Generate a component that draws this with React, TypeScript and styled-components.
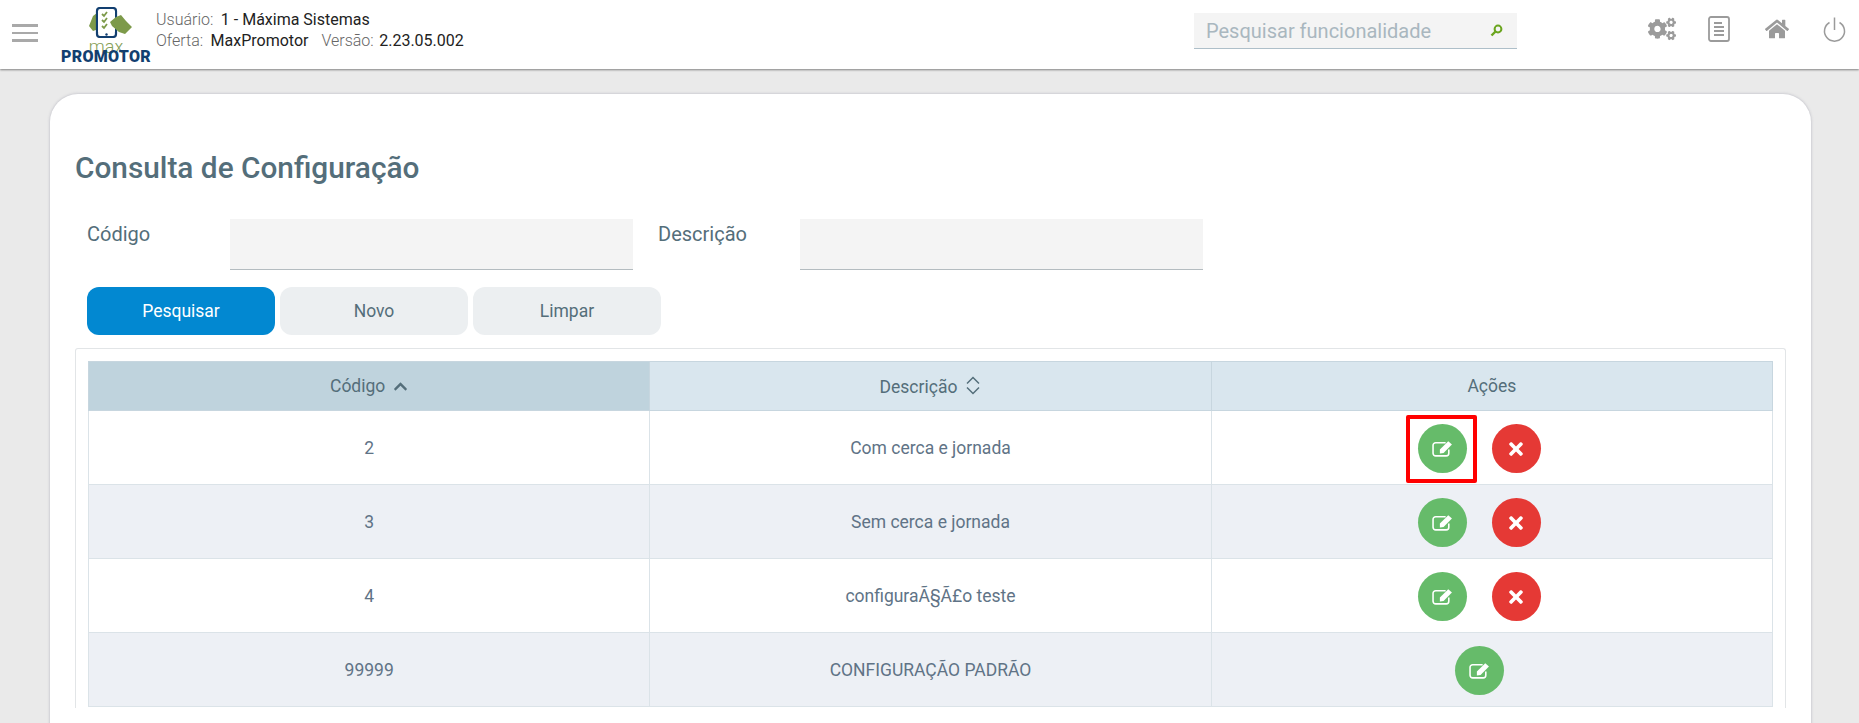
import styled, { createGlobalStyle } from 'styled-components';
import { FaCogs, FaHome, FaTimes, FaChevronUp } from 'react-icons/fa';

const Global = createGlobalStyle`
    html, body {
        margin: 0;
        height: 100%;
        overflow: hidden;
        background: #eaeaea;
        font-family: Roboto, "Liberation Sans", sans-serif;
    }
    * { box-sizing: border-box; }
`;

const Header = styled.header`
    height: 69px;
    background: #fff;
    box-shadow: 0 1px 2px rgba(0, 0, 0, 0.45);
    display: flex;
    align-items: flex-start;
`;

const Burger = styled.div`
    width: 26px;
    margin: 24px 0 0 12px;
    display: grid;
    gap: 5px;
    span {
        display: block;
        height: 2.5px;
        background: #a9a9a9;
    }
`;

const Logo = styled.div`
    width: 92px;
    margin: 7px 0 0 22px;
    display: flex;
    flex-direction: column;
    align-items: center;
    svg { display: block; margin-left: 7px; }
`;

const LogoMax = styled.div`
    font-size: 18px;
    font-weight: 300;
    line-height: 8px;
    margin-top: 5px;
    color: #86a057;
`;

const LogoName = styled.div`
    font-size: 16px;
    font-weight: 900;
    line-height: 11px;
    letter-spacing: 0.3px;
    color: #123f70;
`;

const Info = styled.div`
    margin: 9px 0 0 4px;
    font-size: 16px;
    line-height: 21px;
    color: #222;
`;

const InfoLabel = styled.span<{ $tight?: boolean }>`
    color: #666;
    font-weight: 300;
    margin-right: ${(p) => (p.$tight ? 5.5 : 7.5)}px;
`;

const InfoGap = styled.span`
    display: inline-block;
    width: 13px;
`;

const Search = styled.div`
    width: 323px;
    height: 36px;
    margin: 13px 0 0 auto;
    padding: 0 12px;
    background: #f4f4f4;
    border-bottom: 1px solid #aebfc9;
    display: flex;
    align-items: center;
    justify-content: space-between;
    font-size: 20px;
    color: #a9b7bf;
    svg { margin-right: 2px; }
`;

const Tools = styled.div`
    display: flex;
    align-items: center;
    gap: 7.5px;
    height: 28px;
    margin: 15px 0 0 119.5px;
    color: #9b9b9b;
`;

const Tool = styled.div`
    width: 50px;
    display: flex;
    justify-content: center;
`;

const Card = styled.main`
    margin: 25px 48px 0 50px;
    height: 640px;
    padding: 0 25px;
    background: #fff;
    border-radius: 28px 28px 0 0;
    box-shadow: 0 0 3px rgba(80, 80, 110, 0.35);
`;

const Title = styled.h1`
    margin: 0;
    padding-top: 56px;
    height: 125px;
    font-size: 29.8px;
    line-height: 35px;
    font-weight: 500;
    color: #546e7a;
`;

const Filters = styled.div`
    display: grid;
    grid-template-columns: 155px 403px 167px 403px;
    height: 51px;
    font-size: 20px;
    color: #546e7a;
`;

const Label = styled.label`
    padding: 3px 0 0 12px;
    line-height: 24px;
    &:nth-of-type(2) { padding-left: 25px; }
`;

const Field = styled.div`
    background: #f4f4f4;
    border-bottom: 1px solid #b4bcc0;
`;

const Buttons = styled.div`
    display: flex;
    gap: 5px;
    margin: 17px 0 13px 12px;
`;

const Button = styled.button<{ $primary?: boolean }>`
    width: 188px;
    height: 48px;
    padding: 0;
    border: 0;
    border-radius: 12px;
    font: 400 17.5px Roboto, sans-serif;
    background: ${(p) => (p.$primary ? '#0288d1' : '#eceff1')};
    color: ${(p) => (p.$primary ? '#fff' : '#546e7a')};
`;

const TableBox = styled.div`
    height: 360px;
    padding: 12px 12px 0 12px;
    border: 1px solid #e2e5e7;
    border-radius: 3px 3px 0 0;
    border-bottom: 0;
`;

const Table = styled.table`
    width: 1685px;
    table-layout: fixed;
    border-collapse: collapse;
    font-size: 17.5px;
    color: #607386;
`;

const Th = styled.th<{ $sorted?: boolean }>`
    height: 49px;
    padding: 0;
    font-weight: 400;
    color: #546e7a;
    background: ${(p) => (p.$sorted ? '#bfd3dd' : '#d9e6ee')};
    border: 1px solid #c7d6df;
    svg { margin-left: 8px; vertical-align: -2px; }
`;

const Row = styled.tr<{ $odd: boolean }>`
    background: ${(p) => (p.$odd ? '#edf0f5' : '#fff')};
`;

const Td = styled.td`
    height: 74px;
    padding: 0;
    text-align: center;
    border: 1px solid #dbe3e8;
`;

const Actions = styled.div`
    display: flex;
    justify-content: center;
    gap: 25px;
    padding: 2px 25px 0 0;
`;

const Round = styled.span<{ $color: string }>`
    width: 49px;
    height: 49px;
    border-radius: 50%;
    background: ${(p) => p.$color};
    color: #fff;
    display: flex;
    align-items: center;
    justify-content: center;
`;

const Highlight = styled.div`
    position: absolute;
    left: 1406px;
    top: 415px;
    width: 71px;
    height: 68px;
    border: 4px solid #ff0000;
    border-radius: 2px;
`;

const rows = [
    { id: '2', name: 'Com cerca e jornada', remove: true },
    { id: '3', name: 'Sem cerca e jornada', remove: true },
    { id: '4', name: 'configuraÃ§Ã£o teste', remove: true },
    { id: '99999', name: 'CONFIGURAÇÃO PADRÃO', remove: false },
];

function AppLogo() {
    return (
        <svg width="44" height="31" viewBox="0 0 44 31">
            <path d="M1 19 L5 9 L9 6 L10 10 L8 12 L8 23 L5 24 Z" fill="#7d9a4a" />
            <rect x="9" y="1" width="19" height="29" rx="3" fill="#fff" stroke="#123f70" strokeWidth="2.2" />
            <rect x="10" y="4" width="17" height="21" fill="#fff" />
            <circle cx="18.5" cy="27.5" r="1.2" fill="#123f70" />
            <path d="M14 7l2 2 3-4M14 13l2 2 3-4M14 19l2 2 3-4" fill="none" stroke="#7d9a4a" strokeWidth="1.8" />
            <path d="M22 15 L28 10 L33 8 L38 14 L44 20 L37 27 L31 25 L24 19 Z" fill="#7d9a4a" />
        </svg>
    );
}

function EditIcon() {
    return (
        <svg width="21" height="17" viewBox="0 0 20 16">
            <path d="M13 2.5H3.5A2.5 2.5 0 0 0 1 5v7.5A2.5 2.5 0 0 0 3.5 15h10a2.5 2.5 0 0 0 2.5-2.5V9" fill="none" stroke="#fff" strokeWidth="1.5" />
            <path d="M7.5 9L15.5 1L19 4.2L11 12.4L7.5 12.8Z" fill="#fff" />
        </svg>
    );
}

function App() {
    return (
        <>
            <Global />
            <Header>
                <Burger>
                    <span />
                    <span />
                    <span />
                </Burger>
                <Logo>
                    <AppLogo />
                    <LogoMax>max</LogoMax>
                    <LogoName>PROMOTOR</LogoName>
                </Logo>
                <Info>
                    <div>
                        <InfoLabel>Usuário:</InfoLabel>1 - Máxima Sistemas
                    </div>
                    <div>
                        <InfoLabel>Oferta:</InfoLabel>MaxPromotor
                        <InfoGap />
                        <InfoLabel $tight>Versão:</InfoLabel>2.23.05.002
                    </div>
                </Info>
                <Search>
                    Pesquisar funcionalidade
                    <svg width="13" height="13" viewBox="0 0 13 13">
                        <circle cx="8" cy="5" r="3.4" fill="none" stroke="#6aa51e" strokeWidth="2" />
                        <path d="M5.5 7.5L1.5 11.5" stroke="#6aa51e" strokeWidth="2.4" />
                    </svg>
                </Search>
                <Tools>
                    <Tool>
                        <FaCogs size={28} />
                    </Tool>
                    <Tool>
                        <svg width="22" height="26" viewBox="0 0 22 26" fill="none" stroke="#9b9b9b" strokeWidth="1.8">
                            <rect x="1" y="1" width="20" height="24" rx="2" />
                            <path d="M6 7h8M6 11h10M6 15h10M6 19h10" strokeWidth="1.8" />
                        </svg>
                    </Tool>
                    <Tool>
                        <FaHome size={24} />
                    </Tool>
                    <Tool>
                        <svg width="23" height="25" viewBox="0 0 23 25" fill="none" stroke="#9b9b9b" strokeWidth="1.5">
                            <path d="M11.5 0.5v12.5" />
                            <path d="M6.5 5.5a10 10 0 1 0 10 0" />
                        </svg>
                    </Tool>
                </Tools>
            </Header>
            <Card>
                <Title>Consulta de Configuração</Title>
                <Filters>
                    <Label>Código</Label>
                    <Field />
                    <Label>Descrição</Label>
                    <Field />
                </Filters>
                <Buttons>
                    <Button $primary>Pesquisar</Button>
                    <Button>Novo</Button>
                    <Button>Limpar</Button>
                </Buttons>
                <TableBox>
                    <Table>
                        <thead>
                            <tr>
                                <Th $sorted>
                                    Código
                                    <FaChevronUp size={15} />
                                </Th>
                                <Th>
                                    Descrição
                                    <svg width="16" height="19" viewBox="0 0 16 19" fill="none" stroke="#546e7a" strokeWidth="1.5">
                                        <path d="M2 7.5L8 1.5L14 7.5M2 11.5L8 17.5L14 11.5" />
                                    </svg>
                                </Th>
                                <Th>Ações</Th>
                            </tr>
                        </thead>
                        <tbody>
                            {rows.map((row, i) => (
                                <Row key={row.id} $odd={i % 2 === 1}>
                                    <Td>{row.id}</Td>
                                    <Td>{row.name}</Td>
                                    <Td>
                                        <Actions>
                                            <Round $color="#66bb6a">
                                                <EditIcon />
                                            </Round>
                                            {row.remove && (
                                                <Round $color="#e53935">
                                                    <FaTimes size={20} />
                                                </Round>
                                            )}
                                        </Actions>
                                    </Td>
                                </Row>
                            ))}
                        </tbody>
                    </Table>
                </TableBox>
            </Card>
            <Highlight />
        </>
    );
}

export default App;
